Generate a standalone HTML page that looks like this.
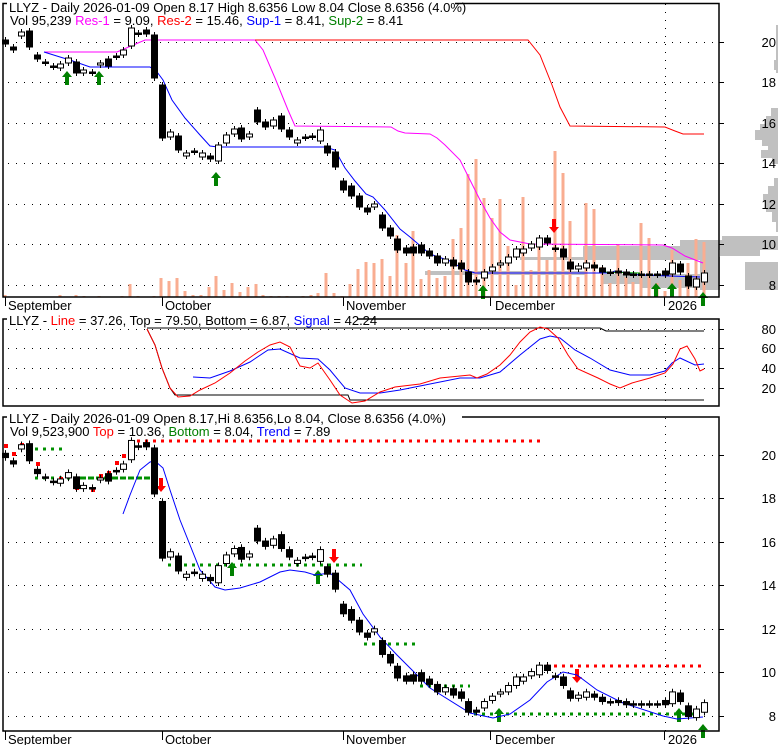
<!DOCTYPE html>
<html><head><meta charset="utf-8"><style>
html,body{margin:0;padding:0;background:#fff;}
svg{display:block;font-family:"Liberation Sans",Arial,sans-serif;font-size:13px;}
</style></head><body>
<svg id="s" width="780" height="745" viewBox="0 0 780 745" xmlns="http://www.w3.org/2000/svg">
<rect width="780" height="745" fill="#fff"/>
<g id="grid" stroke="#000" stroke-dasharray="1,7" stroke-width="1"></g>
<g id="vbp" fill="#c0c0c0"></g>
<g id="vol" stroke="#f9ad91" stroke-width="3"></g>
<polyline fill="none" stroke="#ff00ff" stroke-width="1" points="44,52 117,52 131,46 145,40 255,40 263,50 275,78 288,110 295,126 391,127 398,131 405,133 430,134 437,138 445,145 460,160 470,180 480,200 490,218 500,232 510,240 530,244 663,245 672,248 685,256 703,263"/>
<polyline fill="none" stroke="#ff0000" stroke-width="1" points="255,40 528,40 540,55 552,85 560,107 570,126 665,127 675,131 683,134 704,134"/>
<polyline fill="none" stroke="#0000ff" stroke-width="1" points="44,52 60,57 70,60 90,67 150,67 157,72 163,80 172,100 185,118 200,135 210,146 218,147 325,147 335,150 345,168 355,181 366,194 373,197 385,210 400,229 410,237 430,254 450,261 465,270 475,273 610,273 615,271 640,275 700,277"/>
<polyline fill="none" stroke="#00a000" stroke-width="1" points="600,272 640,273"/>
<g id="c1"></g>
<g id="arr"></g>
<polyline fill="none" stroke="#000" stroke-width="1" points="147,329 155,345 162,368 170,388 175,395 348,395 350,400 704,400"/>
<polyline fill="none" stroke="#000" stroke-width="1" points="147,328 600,328 606,331 704,331"/>
<polyline fill="none" stroke="#0000ff" stroke-width="1" points="193,377 210,378 230,371 250,362 268,350 280,349 300,358 318,359 330,370 345,388 360,393 380,393 400,390 420,386 460,378 480,378 500,372 520,355 540,339 550,336 560,338 575,350 590,358 610,370 630,375 650,375 665,371 672,363 680,358 695,365 704,364"/>
<polyline fill="none" stroke="#ff0000" stroke-width="1" points="147,329 155,345 162,368 170,388 178,397 190,396 200,390 215,383 230,373 245,361 258,352 270,345 280,342 290,347 300,366 310,368 318,363 330,380 340,395 352,403 365,401 380,392 395,387 420,384 440,378 460,376 470,375 477,378 487,374 500,365 510,355 520,342 530,332 540,327 548,329 558,338 568,355 578,369 598,378 610,384 620,388 632,383 650,378 665,373 673,364 680,349 687,346 695,359 700,371 704,369"/>
<g id="dots"></g>
<polyline fill="none" stroke="#0000ff" stroke-width="1" points="123,514 130,495 140,470 150,462 155,461 163,468 170,490 180,520 190,545 200,570 215,587 225,590 240,588 260,582 280,572 290,570 305,572 315,575 330,573 350,590 363,614 380,637 397,655 430,688 470,713 493,718 510,714 530,700 547,682 563,672 577,675 597,690 623,703 663,716 677,719 703,717"/>
<g id="c2"></g>
<g id="frames" fill="none" stroke="#000" stroke-width="1.5"></g>
<g id="txt"></g>
</svg>
<script>
var NS="http://www.w3.org/2000/svg";
function el(p,t,a,txt){var e=document.createElementNS(NS,t);for(var k in a)e.setAttribute(k,a[k]);if(txt!==undefined)e.textContent=txt;document.getElementById(p).appendChild(e);return e;}
var tp=[42,82,123,163,204,244,285],bp=[455,498,542,585,629,672,716],mp=[329,348,368,388];
tp.forEach(function(y){el("grid","line",{x1:8,y1:y+.5,x2:719,y2:y+.5});});
bp.forEach(function(y){el("grid","line",{x1:8,y1:y+.5,x2:719,y2:y+.5});});
mp.forEach(function(y){el("grid","line",{x1:8,y1:y+.5,x2:719,y2:y+.5});});
[[4,297],[320,406],[418,731]].forEach(function(r){el("grid","line",{x1:665.5,y1:r[0],x2:665.5,y2:r[1]});});
[[776,25,2,48],[774,60,4,10],[771,108,7,8],[766,116,12,8],[760,124,18,6],[755,130,23,10],[762,140,16,6],[768,146,10,4],[761,150,17,8],[772,158,6,6],
 [774,178,4,8],[768,186,10,8],[763,194,15,8],[766,202,12,10],[772,212,6,10],[776,222,2,10],
 [722,236,56,4],[680,240,98,6],[583,246,195,4],[583,250,136,10],[720,250,40,6],[520,257,200,3],[425,271,160,4],[603,274,116,10],[745,262,33,28],[640,284,79,4],[700,258,20,32]].forEach(function(r){el("vbp","rect",{x:r[0],y:r[1],width:r[2],height:r[3]});});
var vols=[[5,295],[28,297],[60,295],[76,295],[84,296],[99,296],[107,297],[114,297],[122,296],[130,284],[138,296],[146,297],[154,296],[161,278],[169,281],[177,278],[185,291],[193,295],[201,295],[209,287],[216,276],[224,290],[232,283],[240,292],[248,287],[256,284],[263,295],[271,296],[279,296],[287,296],[295,297],[303,296],[311,295],[318,293],[326,273],[334,293],[342,296],[350,284],[358,269],[366,262],[374,263],[382,259],[390,276],[397,235],[406,263],[413,231],[421,279],[429,270],[437,278],[445,276],[453,239],[461,228],[468,174],[476,159],[484,198],[492,218],[500,199],[508,246],[516,285],[523,197],[531,270],[539,247],[547,260],[555,151],[563,173],[570,221],[578,277],[586,203],[594,209],[602,267],[610,283],[618,244],[626,277],[633,282],[641,223],[649,238],[657,283],[665,291],[672,250],[680,280],[688,263],[696,239],[704,242]];
vols.forEach(function(v){el("vol","line",{x1:v[0],y1:v[1],x2:v[0],y2:297});});
var C=[[5,40,44,1],[13,47,50,1],[21,32,36,0],[29,31,47,1],[37,55,59,1],[45,62,63,1],[53,66,67,1],[60,64,68,0],[68,58,63,0],[76,62,73,1],[83,70,73,0],[92,72,73,1],[100,63,65,0],[108,59,66,1],[116,56,57,1],[123,50,55,0],[131,28,46,0],[138,33,34,1],[146,30,34,1],[154,35,78,1],[162,85,138,1],[170,132,137,0],[178,136,150,1],[186,153,156,0],[194,151,152,1],[202,153,157,0],[210,156,159,1],[218,145,161,0],[226,135,143,0],[234,129,134,0],[241,128,139,1],[249,134,137,0],[257,110,122,1],[265,122,127,1],[273,120,126,0],[281,116,129,1],[289,130,137,1],[297,140,143,0],[305,137,138,1],[312,136,137,1],[320,130,141,0],[327,146,153,1],[335,152,167,1],[343,181,190,1],[351,186,196,1],[359,196,207,1],[367,208,212,1],[374,204,207,0],[382,215,228,1],[390,228,236,1],[397,239,250,1],[406,248,253,1],[413,247,253,1],[421,245,253,1],[429,251,256,1],[437,256,263,1],[445,259,263,0],[453,260,266,1],[461,263,269,1],[468,272,282,1],[476,280,282,1],[484,272,278,0],[492,267,271,0],[500,263,265,0],[508,257,263,0],[516,249,257,0],[523,249,253,0],[531,244,248,0],[539,238,247,0],[547,238,243,1],[555,248,249,1],[563,249,257,1],[570,262,269,1],[578,266,269,0],[586,263,268,0],[594,265,268,1],[602,268,272,1],[610,272,273,1],[618,271,273,1],[626,272,275,1],[633,274,275,1],[641,274,275,1],[649,274,275,1],[657,274,275,1],[665,271,275,1],[672,263,274,0],[680,264,272,1],[688,276,286,1],[696,279,287,0],[704,273,282,0]];
function candles(g,f){C.forEach(function(c){var t=f(c[1]),b=f(c[2]);var wt=f(c[1]-3),wb=f(c[2]+3);
el(g,"line",{x1:c[0]+.5,y1:wt,x2:c[0]+.5,y2:wb,stroke:"#000","stroke-width":1});
var h=Math.max(b-t,1.5);
el(g,"rect",{x:c[0]-2.5,y:t,width:6,height:h,fill:c[3]?"#000":"#fff",stroke:"#000","stroke-width":1});});}
candles("c1",function(y){return y;});
candles("c2",function(y){return 410.5+1.07*y;});
function up(x,y){el("arr","path",{d:"M"+x+" "+y+" l5 6 h-3 v8 h-4 v-8 h-3 z",fill:"#008000"});}
function dn(x,y){el("arr","path",{d:"M"+x+" "+(y+14)+" l5 -6 h-3 v-8 h-4 v8 h-3 z",fill:"#ff0000"});}
[[67,71],[99,71],[216,172],[483,285],[656,283],[672,283],[703,292],[232,562],[318,570],[499,708],[679,708],[703,724]].forEach(function(a){up(a[0],a[1]);});
[[554,219],[161,478],[334,549],[577,669]].forEach(function(a){dn(a[0],a[1]);});
function dl(x1,x2,y,c){el("dots","line",{x1:x1,y1:y,x2:x2,y2:y,stroke:c,"stroke-width":3,"stroke-dasharray":"3,5"});}
dl(137,540,441,"#ff0000");dl(546,706,666,"#ff0000");
dl(35,62,449,"#009000");dl(35,150,478,"#009000");dl(80,160,478,"#009000");dl(168,362,565,"#009000");dl(364,417,644,"#009000");dl(420,470,686,"#009000");dl(474,700,714,"#009000");
[[5,452],[13,460],[21,451],[37,470],[60,485],[76,494],[92,496],[100,482],[108,479],[116,469],[123,462]].forEach(function(p){el("dots","rect",{x:p[0]-1,y:p[1]-8,width:4,height:4,fill:"#ff0000"});});
el("frames","rect",{x:3,y:3.5,width:716,height:293.5});
el("frames","rect",{x:3,y:319,width:716,height:87});
el("frames","rect",{x:3,y:417,width:716,height:314});
[5,162,343,490,664].forEach(function(x){el("frames","line",{x1:x+.5,y1:297,x2:x+.5,y2:306,"stroke-width":1});el("frames","line",{x1:x+.5,y1:731,x2:x+.5,y2:740,"stroke-width":1});});
tp.forEach(function(y){el("frames","line",{x1:719,y1:y+.5,x2:724,y2:y+.5,"stroke-width":1});});
bp.forEach(function(y){el("frames","line",{x1:719,y1:y+.5,x2:724,y2:y+.5,"stroke-width":1});});
mp.forEach(function(y){el("frames","line",{x1:719,y1:y+.5,x2:724,y2:y+.5,"stroke-width":1});});
function T(x,y,parts,anchor){var t=el("txt","text",{x:x,y:y,"xml:space":"preserve","text-anchor":anchor||"start"});
parts.forEach(function(p){var s=document.createElementNS(NS,"tspan");s.setAttribute("fill",p[1]||"#000");s.textContent=p[0];t.appendChild(s);});return t;}
function bg(x,y,w,h){el("txt","rect",{x:x,y:y,width:w,height:h,fill:"#fff"});}
bg(7,0,448,14);bg(7,314,350,12);bg(7,412,455,12);
T(9,12,[["LLYZ - Daily 2026-01-09 Open 8.17  High 8.6356  Low 8.04  Close 8.6356 (4.0%)"]]);
T(10,25,[["Vol 95,239 "],["Res-1","#ff00ff"],[" = 9.09, "],["Res-2","#ff0000"],[" = 15.46, "],["Sup-1","#0000ff"],[" = 8.41, "],["Sup-2","#008000"],[" = 8.41"]]);
T(9,325,[["LLYZ - "],["Line","#ff0000"],[" = 37.26, Top = 79.50, Bottom = 6.87, "],["Signal","#0000ff"],[" = 42.24"]]);
T(9,423,[["LLYZ - Daily 2026-01-09 Open 8.17,Hi 8.6356,Lo 8.04, Close 8.6356 (4.0%)"]]);
T(10,436,[["Vol 9,523,900 "],["Top","#ff0000"],[" = 10.36, "],["Bottom","#008000"],[" = 8.04, "],["Trend","#0000ff"],[" = 7.89"]]);
[["September",8],["October",165],["November",346],["December",495],["2026",668]].forEach(function(m){T(m[1],310,[[m[0]]]);T(m[1],744,[[m[0]]]);});
[20,18,16,14,12,10,8].forEach(function(v,i){T(776,tp[i]+5,[[String(v)]],"end");T(776,bp[i]+5,[[String(v)]],"end");});
[80,60,40,20].forEach(function(v,i){T(776,mp[i]+5,[[String(v)]],"end");});
</script>
</body></html>
